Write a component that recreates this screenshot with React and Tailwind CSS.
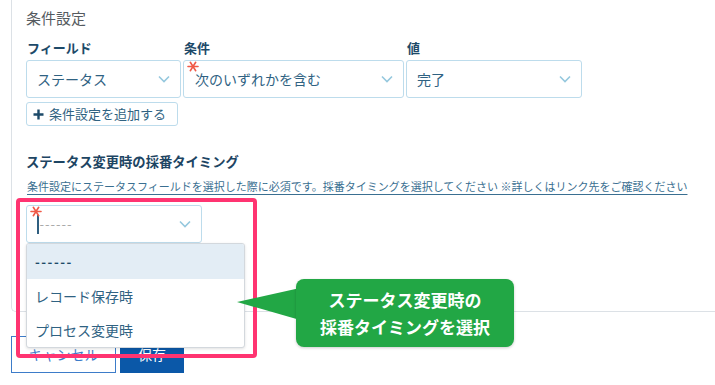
import React from 'react';

function Chevron({ className = '' }) {
  return (
    <svg width="12" height="8" viewBox="0 0 12 8" className={className}>
      <polyline points="1,1.5 6,6.5 11,1.5" fill="none" stroke="#95c8de" strokeWidth="1.6" />
    </svg>
  );
}

function Asterisk({ className = '' }) {
  return (
    <svg width="12" height="11" viewBox="0 0 12 11" className={className}>
      <g stroke="#f05a48" strokeWidth="1.6" strokeLinecap="round">
        <path d="M1 5.5h10" />
        <path d="M3.3 1.3l5.4 8.4" />
        <path d="M8.7 1.3l-5.4 8.4" />
      </g>
    </svg>
  );
}

function Select({ width, value, required, placeholder }) {
  return (
    <div
      className={`relative flex h-[38px] items-center rounded-[3px] border border-[#bddcec] bg-white pl-[10px] pr-[10px] ${width}`}
    >
      {required && <Asterisk className="absolute left-[3px] top-[0px]" />}
      {placeholder ? (
        <span className="flex items-center">
          <span className="h-[19px] w-[1.5px] bg-[#2f5f80]" />
          <span className="ml-[1px] text-[13px] tracking-[1px] text-[#a9a9a9]">------</span>
        </span>
      ) : (
        <span className={`text-[14px] text-[#2f6282] ${required ? 'pl-[1px]' : ''}`}>{value}</span>
      )}
      <Chevron className="ml-auto" />
    </div>
  );
}

export default function App() {
  const cols = [
    { label: 'フィールド', value: 'ステータス', width: 'w-[155px]' },
    { label: '条件', value: '次のいずれかを含む', width: 'w-[221px]', required: true },
    { label: '値', value: '完了', width: 'w-[176px]' },
  ];

  return (
    <div className="relative h-[385px] w-[715px] overflow-hidden bg-white font-['Noto_Sans_CJK_JP','Noto_Sans',sans-serif]">
      {/* card */}
      <div className="ml-[11px] h-[312px] rounded-bl-[5px] border-b border-l border-[#dce1e6] pl-[14px] pt-[8px]">
        <div className="text-[15px] leading-[20px] text-[#555b60]">条件設定</div>

        <div className="mt-[12px] flex gap-[2px]">
          {cols.map((c) => (
            <div key={c.label} className="flex flex-col">
              <div className="mb-[4px] pl-[1px] text-[13px] font-bold leading-[16px] text-[#1d4a69]">{c.label}</div>
              <Select width={c.width} value={c.value} required={c.required} />
            </div>
          ))}
        </div>

        <button className="mt-[4px] flex h-[24px] w-[152px] items-center gap-[5px] rounded-[3px] border border-[#bddcec] bg-white pl-[6px] text-[13px] text-[#2f6282]">
          <svg width="11" height="11" viewBox="0 0 11 11">
            <path d="M5.5 0.5v10M0.5 5.5h10" stroke="#1d4a69" strokeWidth="2.4" />
          </svg>
          条件設定を追加する
        </button>

        <div className="mt-[27px] text-[13.3px] font-bold leading-[18px] text-[#1d4563]">
          ステータス変更時の採番タイミング
        </div>
        <div className="mt-[7px] pl-[1px] text-[11px] leading-[16px] text-[#3a6f91] underline underline-offset-[3px]">
          条件設定にステータスフィールドを選択した際に必須です。採番タイミングを選択してください ※詳しくはリンク先をご確認ください
        </div>

        <div className="mt-[11px]">
          <Select width="w-[176px]" required placeholder />
        </div>
      </div>

      {/* footer buttons */}
      <div className="ml-[11px] mt-[24px] flex gap-[4px]">
        <button className="h-[37px] w-[105px] border border-[#3d7cc9] bg-white text-[14px] text-[#3d7cc9]">キャンセル</button>
        <button className="h-[37px] w-[64px] bg-[#0b58a8] text-[14px] text-white">保存</button>
      </div>

      {/* open dropdown menu */}
      <div className="absolute left-[26px] top-[243px] w-[219px] overflow-hidden rounded-[3px] border border-[#d3d8dd] bg-white shadow-[0_1px_3px_rgba(0,0,0,0.12)]">
        <div className="flex h-[35px] items-center bg-[#e3edf5] pl-[8px] text-[13px] font-bold tracking-[1.5px] text-[#1d4a69]">------</div>
        <div className="flex h-[34px] items-center pl-[8px] text-[14px] text-[#2f6282]">レコード保存時</div>
        <div className="flex h-[34px] items-center pl-[8px] text-[14px] text-[#2f6282]">プロセス変更時</div>
      </div>

      {/* highlight frame */}
      <div className="pointer-events-none absolute left-[16px] top-[198px] h-[160px] w-[241px] rounded-[4px] border-[4px] border-[#ff3471]" />

      {/* callout */}
      <svg className="absolute left-[236px] top-[280px]" width="64" height="44" viewBox="0 0 64 44">
        <polygon points="1,22 64,8 64,40" fill="#22a745" />
      </svg>
      <div className="absolute left-[296px] top-[279px] flex h-[68px] w-[218px] flex-col items-center justify-center rounded-[8px] bg-[#22a745] text-[17px] font-bold leading-[27px] text-white shadow-[0_1px_3px_rgba(0,0,0,0.2)]">
        <div>ステータス変更時の</div>
        <div>採番タイミングを選択</div>
      </div>
    </div>
  );
}
